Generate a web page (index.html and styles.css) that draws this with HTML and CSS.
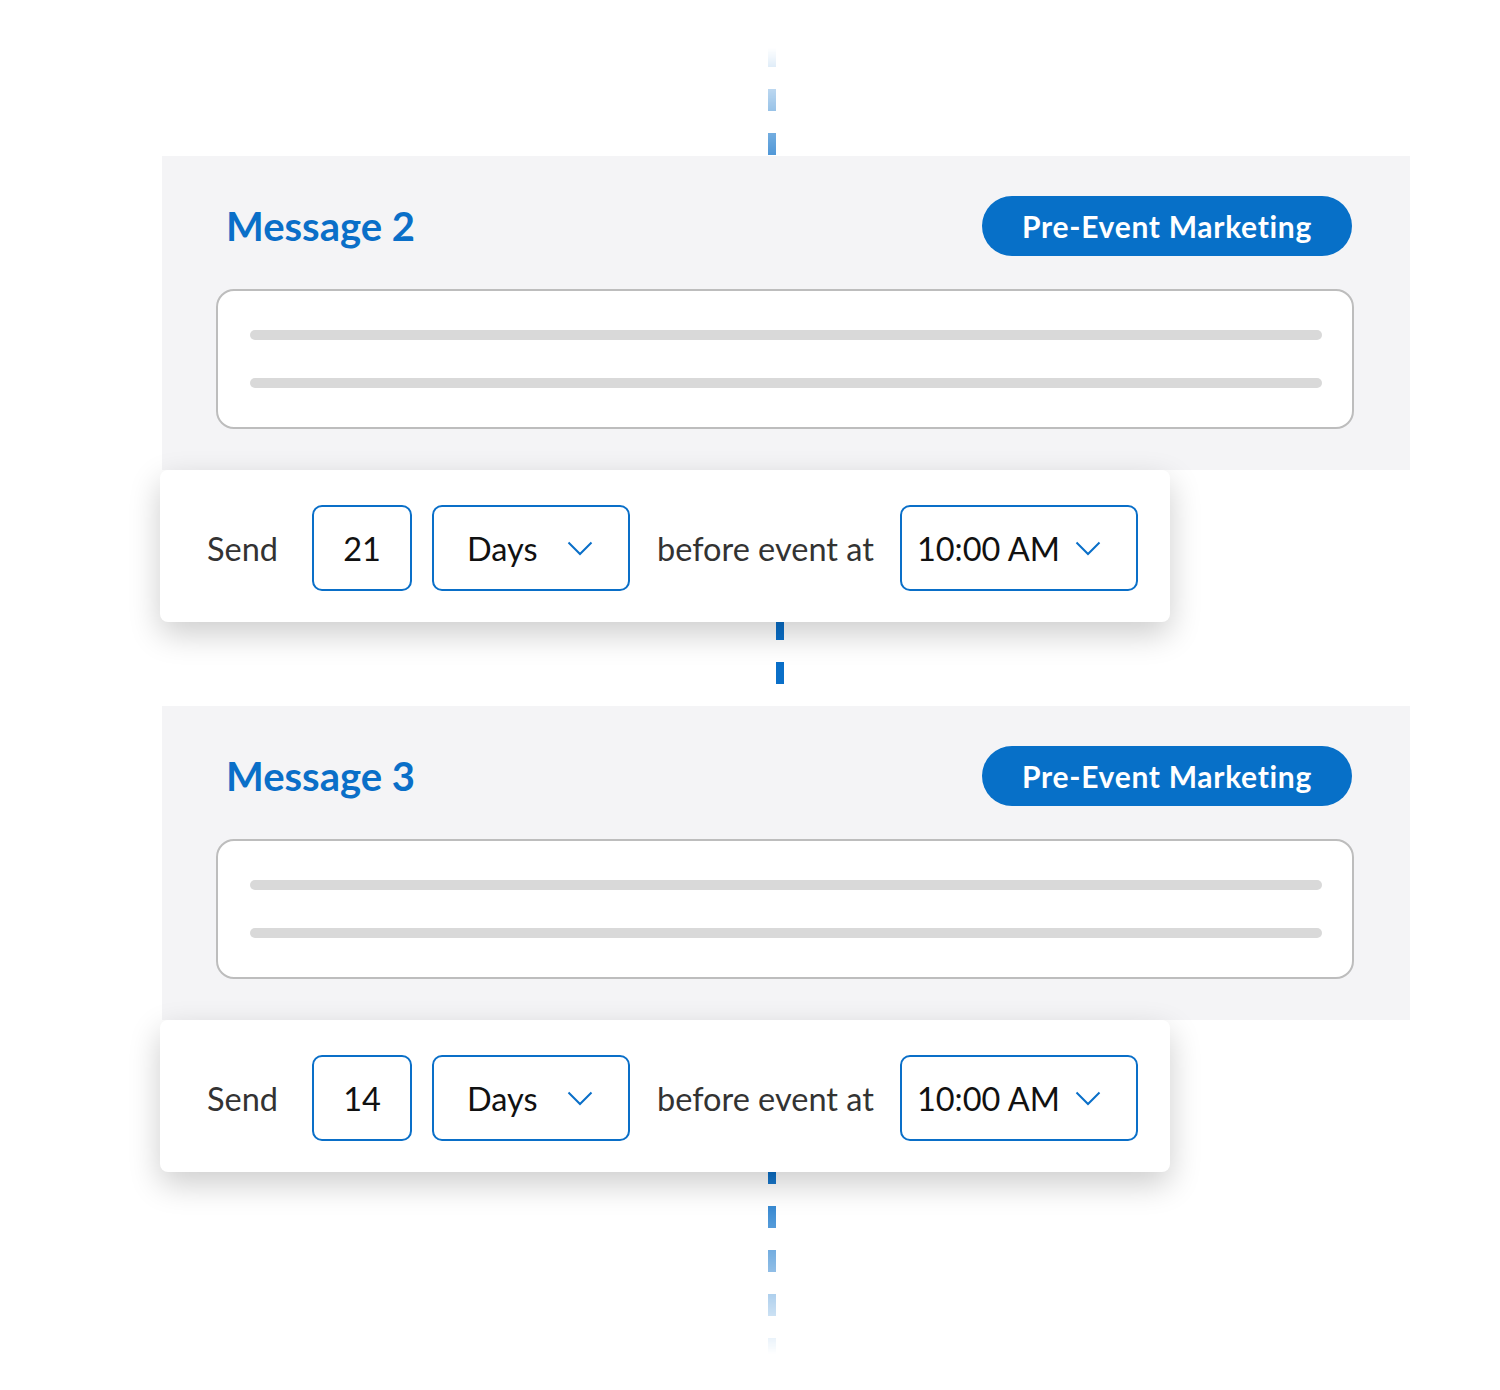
FILE: index.html
```html
<!DOCTYPE html>
<html lang="en">
<head>
  <meta charset="UTF-8" />
  <meta name="viewport" content="width=device-width, initial-scale=1" />
  <title>Message Sequence</title>
  <link rel="stylesheet" href="styles.css">
</head>
<body>
  <main class="sequence">
    <div class="connector connector-top"></div>

    <!-- Message 2 -->
    <section class="message">
      <div class="message-panel">
        <div class="message-head">
          <h2>Message 2</h2>
          <span class="tag">Pre-Event Marketing</span>
        </div>
        <div class="message-body">
          <span class="line"></span>
          <span class="line"></span>
        </div>
      </div>
      <div class="schedule">
        <span class="label label-send">Send</span>
        <div class="field field-number">21</div>
        <div class="field field-select field-unit">
          <span>Days</span>
          <svg class="chevron" width="26" height="15" viewBox="0 0 26 15"><path d="M1.5 1.5 L13 13 L24.5 1.5" /></svg>
        </div>
        <span class="label label-before">before event at</span>
        <div class="field field-select field-time">
          <span>10:00 AM</span>
          <svg class="chevron" width="26" height="15" viewBox="0 0 26 15"><path d="M1.5 1.5 L13 13 L24.5 1.5" /></svg>
        </div>
      </div>
    </section>

    <div class="connector connector-mid"></div>

    <!-- Message 3 -->
    <section class="message">
      <div class="message-panel">
        <div class="message-head">
          <h2>Message 3</h2>
          <span class="tag">Pre-Event Marketing</span>
        </div>
        <div class="message-body">
          <span class="line"></span>
          <span class="line"></span>
        </div>
      </div>
      <div class="schedule">
        <span class="label label-send">Send</span>
        <div class="field field-number">14</div>
        <div class="field field-select field-unit">
          <span>Days</span>
          <svg class="chevron" width="26" height="15" viewBox="0 0 26 15"><path d="M1.5 1.5 L13 13 L24.5 1.5" /></svg>
        </div>
        <span class="label label-before">before event at</span>
        <div class="field field-select field-time">
          <span>10:00 AM</span>
          <svg class="chevron" width="26" height="15" viewBox="0 0 26 15"><path d="M1.5 1.5 L13 13 L24.5 1.5" /></svg>
        </div>
      </div>
    </section>

    <div class="connector connector-end"></div>
  </main>
</body>
</html>
```

FILE: styles.css
```css
/* Base */
*, *::before, *::after {
  margin: 0;
  padding: 0;
  box-sizing: border-box;
}
body {
  font-family: 'Lato', 'Open Sans', sans-serif;
  background: #fff;
  color: #222;
}
.sequence {
  width: 1500px;
  padding-bottom: 28px;
}

/* Dashed connector between messages */
.connector {
  width: 8px;
  background: linear-gradient(#0a6fc8 0 22px, transparent 22px) 0 0 / 8px 44px repeat-y;
}
.connector-top {
  height: 156px;
  margin-left: 768px;
  background-position: 0 1px;
  -webkit-mask-image: linear-gradient(to bottom, transparent 48px, rgba(0, 0, 0, 0.72) 156px);
  mask-image: linear-gradient(to bottom, transparent 48px, rgba(0, 0, 0, 0.72) 156px);
}
.connector-mid {
  height: 84px;
  margin-left: 776px;
  background-position: 0 -4px;
}
.connector-end {
  height: 190px;
  margin-left: 768px;
  background-position: 0 -10px;
  -webkit-mask-image: linear-gradient(to bottom, #000 0, transparent 182px);
  mask-image: linear-gradient(to bottom, #000 0, transparent 182px);
}

/* Message panel */
.message-panel {
  margin-left: 162px;
  width: 1248px;
  height: 314px;
  background: #f4f4f6;
  padding: 40px 56px 41px 54px;
}
.message-head {
  display: flex;
  justify-content: space-between;
  align-items: center;
  height: 60px;
  margin-bottom: 33px;
  padding-right: 2px;
}
.message-head h2 {
  font-size: 40px;
  font-weight: 700;
  color: #0a6fc8;
  margin-left: 10px;
  line-height: 1;
}
.tag {
  display: flex;
  align-items: center;
  height: 60px;
  padding: 0 40px 0 40px;
  border-radius: 30px;
  background: #0770c8;
  color: #fff;
  font-size: 30px;
  font-weight: 700;
  letter-spacing: 0.7px;
}
.message-body {
  height: 140px;
  background: #fff;
  border: 2px solid #bdbdbd;
  border-radius: 18px;
  padding: 39px 30px 39px 32px;
  display: flex;
  flex-direction: column;
  gap: 38px;
}
.line {
  display: block;
  height: 10px;
  border-radius: 5px;
  background: #d9d9d9;
}

/* Schedule card */
.schedule {
  position: relative;
  z-index: 1;
  margin-left: 160px;
  width: 1010px;
  height: 152px;
  background: #fff;
  border-radius: 8px;
  box-shadow: 0 12px 32px rgba(0, 0, 0, 0.2);
  display: flex;
  align-items: center;
  padding: 4px 0 0 47px;
  font-size: 32.5px;
}
.label {
  color: #333;
}
.label-send {
  width: 105px;
}
.label-before {
  margin-left: 27px;
  margin-right: 26px;
}
.field {
  height: 86px;
  border: 2px solid #0a6fc8;
  border-radius: 10px;
  color: #111;
  display: flex;
  align-items: center;
}
.field-number {
  width: 100px;
  justify-content: center;
}
.field-select {
  justify-content: space-between;
  padding-right: 35px;
}
.field-unit {
  width: 198px;
  margin-left: 20px;
  padding-left: 33px;
}
.field-time {
  width: 238px;
  padding-left: 15px;
}
.chevron {
  fill: none;
  stroke: #0a6fc8;
  stroke-width: 2;
}
```
